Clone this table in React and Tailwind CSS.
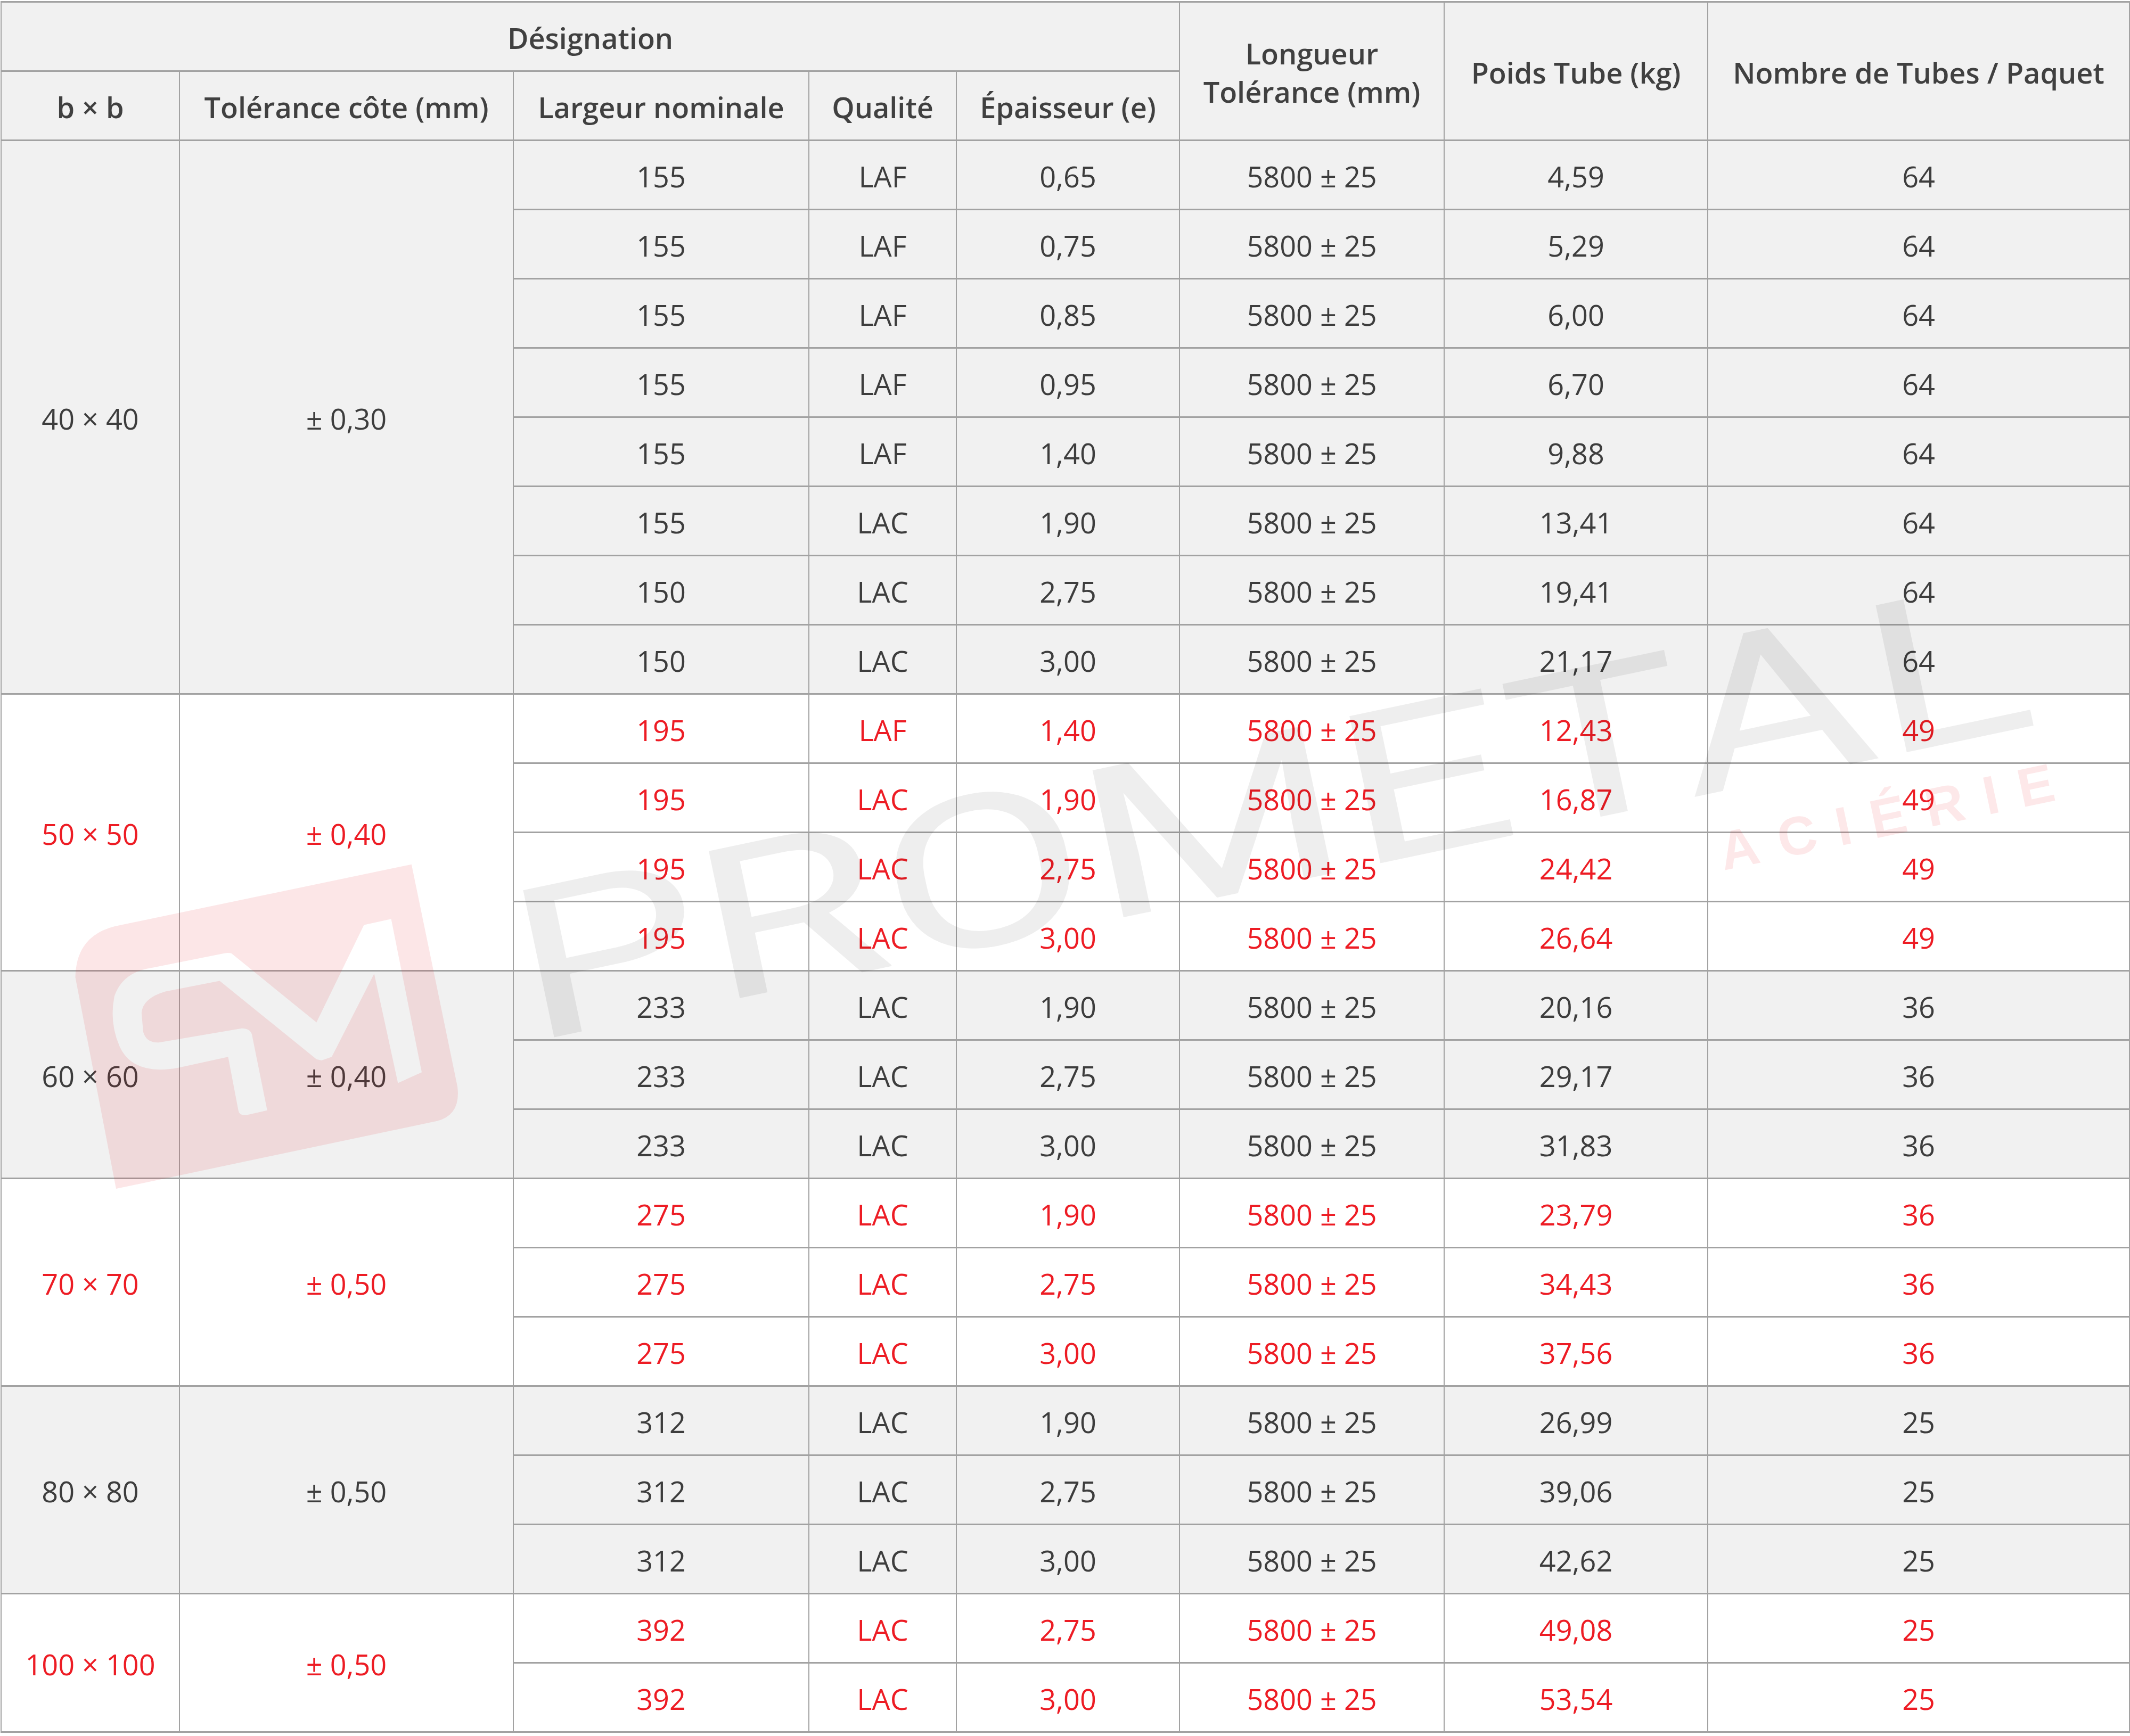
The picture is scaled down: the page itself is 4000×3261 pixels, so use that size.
import React from "react";

const groups = [
  {
    size: "40 × 40",
    tol: "± 0,30",
    red: false,
    rows: [
      ["155", "LAF", "0,65", "4,59", "64"],
      ["155", "LAF", "0,75", "5,29", "64"],
      ["155", "LAF", "0,85", "6,00", "64"],
      ["155", "LAF", "0,95", "6,70", "64"],
      ["155", "LAF", "1,40", "9,88", "64"],
      ["155", "LAC", "1,90", "13,41", "64"],
      ["150", "LAC", "2,75", "19,41", "64"],
      ["150", "LAC", "3,00", "21,17", "64"],
    ],
  },
  {
    size: "50 × 50",
    tol: "± 0,40",
    red: true,
    rows: [
      ["195", "LAF", "1,40", "12,43", "49"],
      ["195", "LAC", "1,90", "16,87", "49"],
      ["195", "LAC", "2,75", "24,42", "49"],
      ["195", "LAC", "3,00", "26,64", "49"],
    ],
  },
  {
    size: "60 × 60",
    tol: "± 0,40",
    red: false,
    rows: [
      ["233", "LAC", "1,90", "20,16", "36"],
      ["233", "LAC", "2,75", "29,17", "36"],
      ["233", "LAC", "3,00", "31,83", "36"],
    ],
  },
  {
    size: "70 × 70",
    tol: "± 0,50",
    red: true,
    rows: [
      ["275", "LAC", "1,90", "23,79", "36"],
      ["275", "LAC", "2,75", "34,43", "36"],
      ["275", "LAC", "3,00", "37,56", "36"],
    ],
  },
  {
    size: "80 × 80",
    tol: "± 0,50",
    red: false,
    rows: [
      ["312", "LAC", "1,90", "26,99", "25"],
      ["312", "LAC", "2,75", "39,06", "25"],
      ["312", "LAC", "3,00", "42,62", "25"],
    ],
  },
  {
    size: "100 × 100",
    tol: "± 0,50",
    red: true,
    rows: [
      ["392", "LAC", "2,75", "49,08", "25"],
      ["392", "LAC", "3,00", "53,54", "25"],
    ],
  },
];

const cell = "border-x-2 border-y-[3px] border-[#a2a2a2] p-0 pt-[5px] text-center align-middle";
const head = `${cell} font-semibold text-[#404040]`;

function Watermark() {
  return (
    <svg
      className="pointer-events-none absolute left-0 top-0"
      width="4000"
      height="3261"
      viewBox="0 0 4000 3261"
    >
      {/* logo: rounded tile with the mark cut out */}
      <path
        fillRule="evenodd"
        fill="rgba(230,30,40,0.11)"
        d="M141.5 1835.7 Q143 1752 227.6 1737.5 L772.8 1623.7 L859 2041 Q866 2094 820.7 2105.8 L218 2233 Z
           M434.8 1791.1 L594.3 1920.5 L683.5 1737.5 L734.6 1726.3 L792 2014.3 L747.3 2034.4 L702.7 1829
           L623 1985.3 L603.8 1992 L594.3 1989.7 L412.5 1842.4 L310.5 1862.5 Q268 1875 265.8 1902.7
           L269 1938.4 Q275 1960 300 1958 L454 1931.7 Q470 1932 473 1942.9 L501.8 2085.7 L463.5 2094.6
           Q449 2096 447.6 2085.7 L428.4 1985.3 L336 2005.4 Q250 2022 224.4 1965.2 Q205 1920 214.8 1871.4
           Q230 1826 285 1817.9 L420 1791 Q430 1789 434.8 1791.1 Z"
      />
      <text
        transform="translate(995 1958) rotate(-11.9)"
        fontFamily="Roboto, 'Noto Sans', sans-serif"
        fontWeight="400"
        fontSize="397"
        textLength="2900"
        lengthAdjust="spacingAndGlyphs"
        fill="rgba(0,0,0,0.065)"
      >
        PROMETAL
      </text>
      <text
        transform="translate(3237 1635) rotate(-11.9)"
        fontFamily="'Liberation Sans', Arial, sans-serif"
        fontWeight="700"
        fontSize="102"
        textLength="640"
        lengthAdjust="spacing"
        fill="rgba(237,28,36,0.1)"
      >
        ACIÉRIE
      </text>
    </svg>
  );
}

export default function App() {
  return (
    <div
      className="relative h-[3261px] w-[4000px] overflow-hidden bg-white pl-px pt-[2px] text-[54px] text-[#3d3d3d]"
      style={{ fontFamily: "'Open Sans', 'Noto Sans', sans-serif" }}
    >
      <table className="w-[3997px] table-fixed border-collapse">
        <colgroup>
          <col className="w-[335px]" />
          <col className="w-[627px]" />
          <col className="w-[555px]" />
          <col className="w-[277px]" />
          <col className="w-[419px]" />
          <col className="w-[497px]" />
          <col className="w-[495px]" />
          <col className="w-[792px]" />
        </colgroup>
        <thead>
          <tr className="h-[130px] bg-[#f1f1f1]">
            <th colSpan={5} className={head}>
              Désignation
            </th>
            <th rowSpan={2} className={`${head} leading-[72px]`}>
              Longueur
              <br />
              Tolérance (mm)
            </th>
            <th rowSpan={2} className={head}>
              Poids Tube (kg)
            </th>
            <th rowSpan={2} className={head}>
              Nombre de Tubes / Paquet
            </th>
          </tr>
          <tr className="h-[130px] bg-[#f1f1f1]">
            <th className={head}>b × b</th>
            <th className={head}>Tolérance côte (mm)</th>
            <th className={head}>Largeur nominale</th>
            <th className={head}>Qualité</th>
            <th className={head}>Épaisseur (e)</th>
          </tr>
        </thead>
        <tbody>
          {groups.map((group) =>
            group.rows.map((row, i) => (
              <tr
                key={group.size + i}
                className={`h-[130px] ${
                  group.red ? "bg-white text-[#ed1c24]" : "bg-[#f1f1f1]"
                }`}
              >
                {i === 0 && (
                  <>
                    <td rowSpan={group.rows.length} className={cell}>
                      {group.size}
                    </td>
                    <td rowSpan={group.rows.length} className={cell}>
                      {group.tol}
                    </td>
                  </>
                )}
                <td className={cell}>{row[0]}</td>
                <td className={cell}>{row[1]}</td>
                <td className={cell}>{row[2]}</td>
                <td className={cell}>5800 ± 25</td>
                <td className={cell}>{row[3]}</td>
                <td className={cell}>{row[4]}</td>
              </tr>
            ))
          )}
        </tbody>
      </table>
      <Watermark />
    </div>
  );
}
